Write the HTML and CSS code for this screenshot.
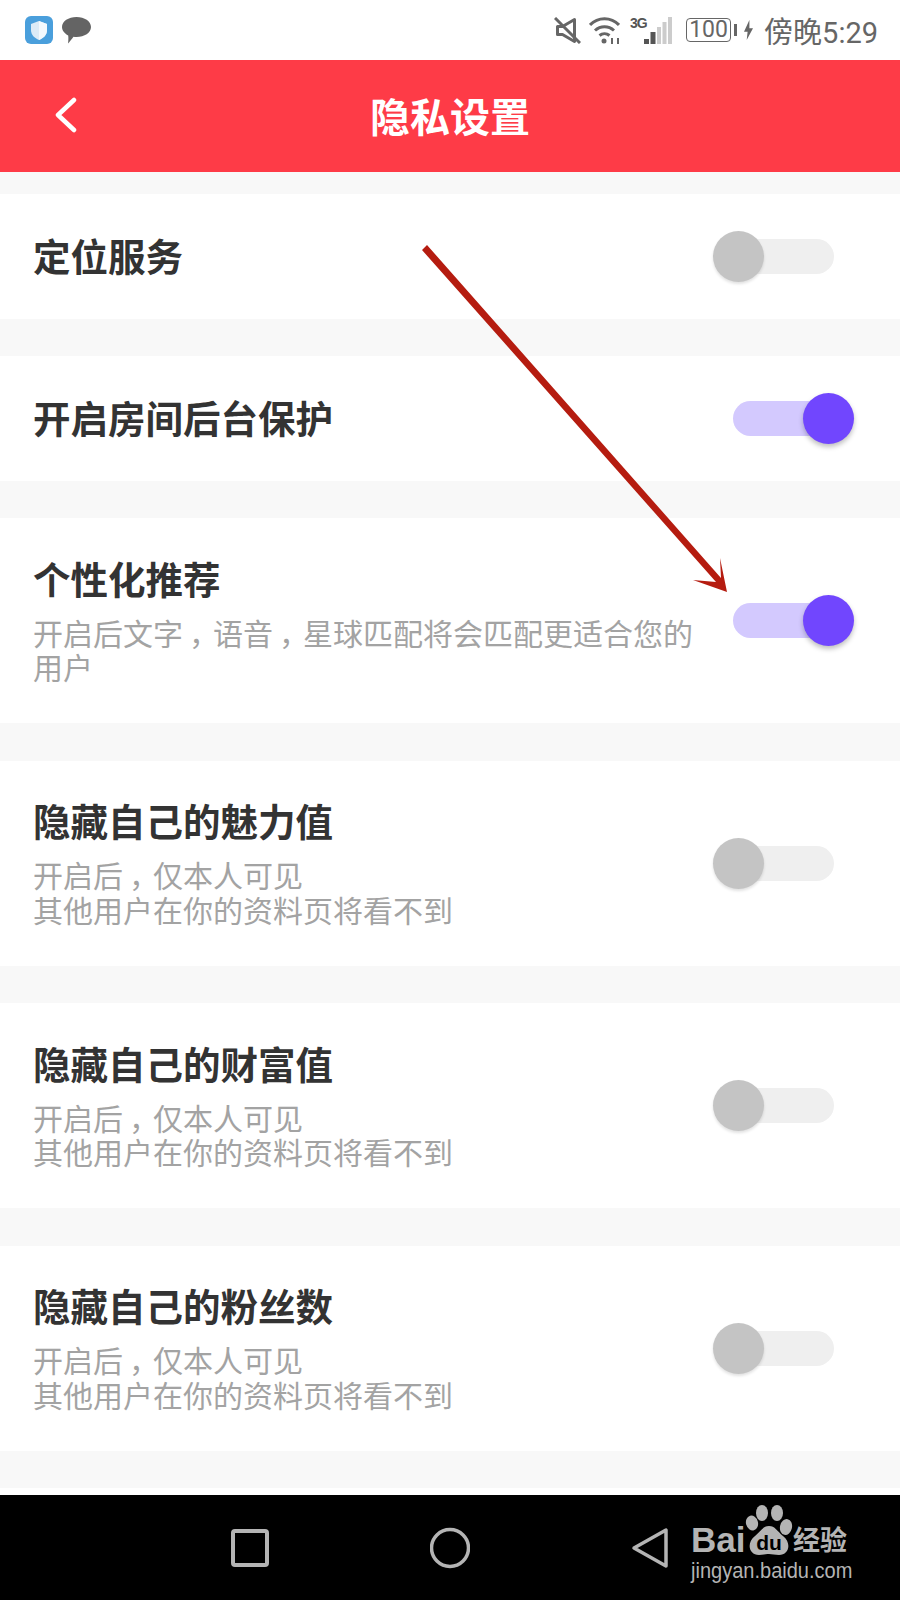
FILE: index.html
```html
<!DOCTYPE html>
<html lang="zh-CN">
<head>
  <meta charset="UTF-8">
  <meta name="viewport" content="width=device-width, initial-scale=1.0">
  <title>隐私设置</title>
  <link rel="stylesheet" href="styles.css">
</head>
<body>
  <div class="status-bar">
    <div class="status-group">
      <svg class="icon-shield" viewBox="0 0 28 28">
        <rect width="28" height="28" rx="6" fill="#4a9fdc"/>
        <path d="M14 5l8 3v6c0 5-3.500 8-8 10-4.500-2-8-5-8-10V8z" fill="#dcebf7"/>
        <path d="M14 5l8 3v6c0 5-3.500 8-8 10z" fill="#f4f9fd"/>
      </svg>
      <svg class="icon-bubble" viewBox="0 0 29 27">
        <path d="M14.500 0C22.500 0 29 4.300 29 10s-6.500 10-14.500 10c-1.200 0-2 0-3-.2C9.500 22.500 7.500 25 6 26.500c.3-2 .6-5 .2-8C2.500 16.500 0 13.500 0 10 0 4.300 6.500 0 14.500 0z" fill="#646464"/>
      </svg>
    </div>
    <div class="status-group status-right">
      <svg class="icon-mute" viewBox="0 0 27 27" fill="none" stroke="#666" stroke-width="3">
        <path d="M3.500 9.500v8h5l12 7V2.500l-12 7z" stroke-linejoin="round"/>
        <path d="M1 1l25 25"/>
      </svg>
      <svg class="icon-wifi" viewBox="0 0 31 27" fill="none" stroke="#666" stroke-width="3">
        <path d="M1 8c8-8.500 21-8.500 29 0"/>
        <path d="M6 13.500c5.500-5 13.500-5 19 0"/>
        <path d="M10.500 18.500c3-2.500 7-2.500 10 0"/>
        <circle cx="15" cy="24" r="2.500" fill="#666" stroke="none"/>
        <path d="M23 21v6M29 21v6" stroke-width="2"/>
      </svg>
      <div class="signal">
        <span class="net-label">3G</span>
        <svg class="icon-signal" viewBox="0 0 28 27">
          <rect x="0" y="22" width="5" height="5" fill="#555"/>
          <rect x="6.500" y="15" width="5" height="12" fill="#555"/>
          <rect x="13" y="10" width="4" height="17" fill="#ccc"/>
          <rect x="18.500" y="5" width="4" height="22" fill="#ccc"/>
          <rect x="24" y="0" width="4" height="27" fill="#ccc"/>
        </svg>
      </div>
      <div class="battery"><span class="battery-level">100</span></div>
      <span class="battery-cap"></span>
      <svg class="icon-charge" viewBox="0 0 10 22"><path d="M6 0L0 13h4l-1 9 7-13H6z" fill="#666"/></svg>
      <span class="clock">傍晚5:29</span>
    </div>
  </div>

  <header class="title-bar">
    <svg class="back-icon" viewBox="0 0 22 36" fill="none" stroke="#fff" stroke-width="4.500" stroke-linecap="round" stroke-linejoin="round">
      <path d="M19 3L3 18l16 15"/>
    </svg>
    <h1>隐私设置</h1>
  </header>

  <main class="settings">
    <div class="row">
      <div class="row-text"><h2>定位服务</h2></div>
      <span class="switch"></span>
    </div>
    <div class="row">
      <div class="row-text"><h2>开启房间后台保护</h2></div>
      <span class="switch on"></span>
    </div>
    <div class="row has-sub">
      <div class="row-text">
        <h2>个性化推荐</h2>
        <p>开启后文字<span class="comma">，</span>语音<span class="comma">，</span>星球匹配将会匹配更适合您的用户</p>
      </div>
      <span class="switch on"></span>
    </div>
    <div class="row has-sub">
      <div class="row-text">
        <h2>隐藏自己的魅力值</h2>
        <p>开启后<span class="comma">，</span>仅本人可见<br>其他用户在你的资料页将看不到</p>
      </div>
      <span class="switch"></span>
    </div>
    <div class="row has-sub">
      <div class="row-text">
        <h2>隐藏自己的财富值</h2>
        <p>开启后<span class="comma">，</span>仅本人可见<br>其他用户在你的资料页将看不到</p>
      </div>
      <span class="switch"></span>
    </div>
    <div class="row has-sub">
      <div class="row-text">
        <h2>隐藏自己的粉丝数</h2>
        <p>开启后<span class="comma">，</span>仅本人可见<br>其他用户在你的资料页将看不到</p>
      </div>
      <span class="switch"></span>
    </div>
    <div class="row-end"></div>
  </main>

  <nav class="nav-bar">
    <svg class="nav-icon" viewBox="0 0 40 42" fill="none" stroke="#b4b4b4" stroke-width="4" stroke-linejoin="round">
      <rect x="3" y="4" width="34" height="34" rx="2"/>
    </svg>
    <svg class="nav-icon" viewBox="0 0 40 42" fill="none" stroke="#b4b4b4" stroke-width="3.500">
      <circle cx="20" cy="21" r="18.500"/>
    </svg>
    <svg class="nav-icon" viewBox="0 0 40 42" fill="none" stroke="#b4b4b4" stroke-width="3.500" stroke-linejoin="round">
      <path d="M36 3v36L4 21z"/>
    </svg>
  </nav>

  <div class="watermark">
    <div class="wm-top">
      <span class="wm-bai">Bai</span>
      <svg class="wm-paw" viewBox="0 0 48 50" fill="#b4b4b4">
        <ellipse cx="7" cy="18" rx="6" ry="7.500" transform="rotate(-15 7 18)"/>
        <ellipse cx="17" cy="8" rx="6" ry="8"/>
        <ellipse cx="32" cy="8" rx="6" ry="8"/>
        <ellipse cx="41" cy="22" rx="6" ry="8" transform="rotate(12 41 22)"/>
        <path d="M24 21c6 0 8 5 14 10 9 7 6 19-4 19-4 0-7-1-10-1s-6 1-10 1C4 50 1 38 10 31c6-5 8-10 14-10z"/>
        <text x="24" y="45" class="wm-du">du</text>
      </svg>
      <span class="wm-cn">经验</span>
    </div>
    <div class="wm-url">jingyan.baidu.com</div>
  </div>

  <svg class="arrow" viewBox="0 0 900 1600">
    <polygon points="422,250 427,245 721,578 720,558 727,592 693,580 716,582" fill="#b51c10"/>
  </svg>
</body>
</html>
```

FILE: styles.css
```css
* {
  box-sizing: border-box;
}
html, body {
  margin: 0;
  height: 1600px;
  overflow: hidden;
}
body {
  position: relative;
  display: flex;
  flex-direction: column;
  font-family: "Noto Sans CJK SC", "Noto Sans", sans-serif;
  background: #f8f8f8;
}

/* status bar */
.status-bar {
  height: 60px;
  flex: none;
  display: flex;
  justify-content: space-between;
  align-items: center;
  padding: 0 22px 0 25px;
  background: #fff;
}
.status-group {
  display: flex;
  align-items: center;
}
.icon-shield {
  width: 28px;
  height: 28px;
  margin-right: 9px;
}
.icon-bubble {
  width: 29px;
  height: 27px;
}
.icon-mute {
  width: 27px;
  height: 27px;
  margin-right: 8px;
}
.icon-wifi {
  width: 31px;
  height: 27px;
  margin-right: 10px;
}
.signal {
  position: relative;
  width: 42px;
  height: 27px;
  margin-right: 14px;
  display: flex;
  justify-content: flex-end;
  align-items: flex-end;
}
.net-label {
  position: absolute;
  left: 0;
  top: -2px;
  font-family: "Liberation Sans", sans-serif;
  font-size: 14px;
  line-height: 16px;
  font-weight: 700;
  letter-spacing: -1px;
  color: #555;
}
.icon-signal {
  width: 28px;
  height: 27px;
}
.battery {
  width: 45px;
  height: 24px;
  border: 1.500px solid #666;
  border-radius: 4px;
  display: flex;
  align-items: center;
  justify-content: center;
}
.battery-level {
  font-family: Roboto, sans-serif;
  font-size: 23px;
  line-height: 20px;
  color: #666;
}
.battery-cap {
  width: 3px;
  height: 12px;
  margin-left: 3px;
  margin-right: 7px;
  background: #666;
}
.icon-charge {
  width: 9px;
  height: 22px;
  margin-right: 11px;
}
.clock {
  font-family: Roboto, "Noto Sans CJK SC", sans-serif;
  font-size: 29px;
  color: #666;
}

/* title */
.title-bar {
  height: 112px;
  flex: none;
  display: grid;
  grid-template-columns: 1fr auto 1fr;
  align-items: center;
  padding: 0 55px 2px;
  background: #fe3b47;
}
.title-bar h1 {
  margin: 0;
  font-size: 40px;
  font-weight: 700;
  color: #fff;
}
.back-icon {
  width: 22px;
  height: 36px;
}

/* list */
.settings {
  flex: 1;
  display: flex;
  flex-direction: column;
  gap: 37.500px;
  padding-top: 22px;
}
.row {
  height: 124.500px;
  flex: none;
  display: flex;
  justify-content: space-between;
  align-items: center;
  padding: 0 47px 0 33px;
  background: #fff;
}
.row.has-sub {
  height: 205px;
}
.row-text {
  padding-bottom: 3px;
}
.row-text h2 {
  margin: 0;
  font-size: 37.500px;
  line-height: 46px;
  font-weight: 700;
  color: #333;
}
.row-text p {
  width: 660px;
  margin: 14px 0 0;
  font-size: 30px;
  line-height: 34.500px;
  color: #a3a3a3;
}
/* the comma sits in the middle of its cell on the phone */
.comma {
  margin-left: 6px;
  letter-spacing: -6px;
}
.row-end {
  height: 7px;
  margin-top: auto;
  background: #fff;
}

/* toggle */
.switch {
  position: relative;
  width: 100px;
  height: 35px;
  flex: none;
  margin-right: 19px;
  border-radius: 18px;
  background: #efefef;
}
.switch::after {
  content: "";
  position: absolute;
  left: -21px;
  top: -8px;
  width: 51px;
  height: 51px;
  border-radius: 50%;
  background: #c4c4c4;
  box-shadow: 0 2px 3px rgba(0, 0, 0, 0.12);
}
.switch.on {
  margin-right: 20px;
  background: #d3c9fe;
}
.switch.on::after {
  left: 70px;
  background: #7146fe;
  box-shadow: 0 3px 5px rgba(0, 0, 0, 0.25);
}

/* navigation */
.nav-bar {
  height: 105px;
  flex: none;
  display: flex;
  justify-content: center;
  align-items: center;
  gap: 160px;
  background: #000;
}
.nav-icon {
  width: 40px;
  height: 42px;
}

/* watermark and annotation over the page */
.watermark {
  position: absolute;
  left: 691px;
  top: 1505px;
  width: 165px;
  color: #b4b4b4;
}
.wm-top {
  height: 50px;
  display: flex;
  align-items: flex-end;
}
.wm-bai {
  width: 54px;
  font-family: "Liberation Sans", sans-serif;
  font-size: 35px;
  line-height: 31px;
  font-weight: 700;
}
.wm-paw {
  width: 48px;
  height: 50px;
}
.wm-du {
  font-family: "Liberation Sans", sans-serif;
  font-size: 21px;
  font-weight: 700;
  text-anchor: middle;
  fill: #000;
}
.wm-cn {
  font-size: 27px;
  line-height: 32px;
  font-weight: 700;
}
.wm-url {
  margin-top: 4px;
  font-family: "Liberation Sans", sans-serif;
  font-size: 22px;
  line-height: 24px;
  white-space: nowrap;
  transform: scaleX(0.91);
  transform-origin: left;
}
.arrow {
  position: absolute;
  left: 0;
  top: 0;
  width: 900px;
  height: 1600px;
  pointer-events: none;
}
```
